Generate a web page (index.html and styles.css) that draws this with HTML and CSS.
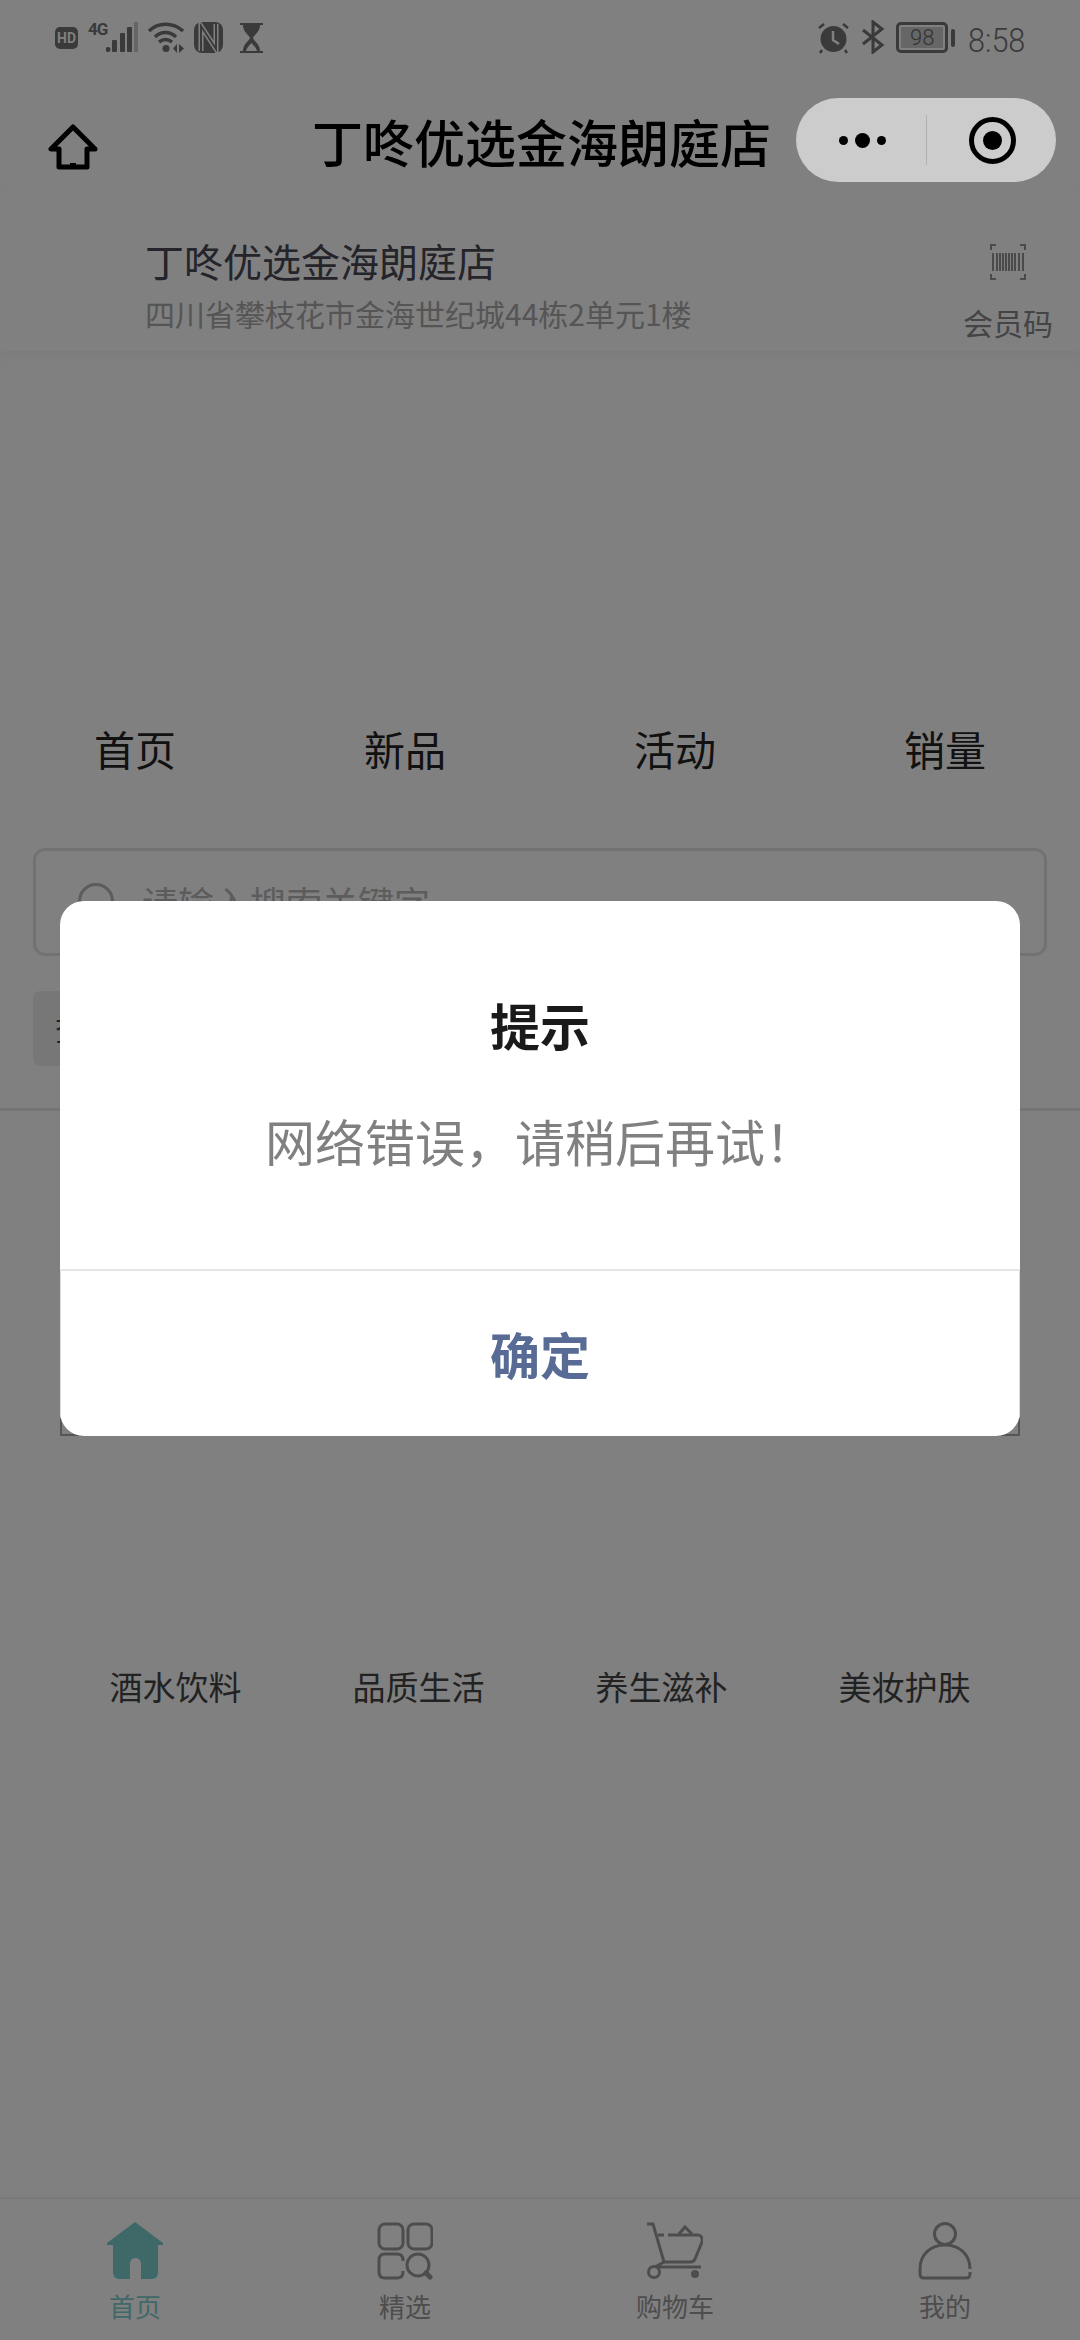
FILE: index.html
```html
<!DOCTYPE html>
<html lang="zh">
<head>
<meta charset="utf-8">
<title>丁咚优选金海朗庭店</title>
<link rel="stylesheet" href="styles.css">
</head>
<body>
<div class="page">
  <div class="status">
    <div class="status-left">
      <div class="hdi"><span>HD</span></div>
      <div class="sig">
        <span class="four">4G</span>
        <svg width="34" height="32" viewBox="20 0 34 32"><circle cx="22" cy="28.500" r="2.500" fill="#3a3a3a"/><rect x="26" y="19" width="5" height="12" rx="1" fill="#3a3a3a"/><rect x="34" y="12" width="5" height="19" rx="1" fill="#3a3a3a"/><rect x="41" y="6" width="5" height="25" rx="1" fill="#3a3a3a"/><rect x="48" y="1" width="4" height="30" fill="#666"/></svg>
      </div>
      <svg class="wifi" width="36" height="31" viewBox="0 0 36 31" fill="none" stroke="#3a3a3a" stroke-width="3.500"><path d="M1 9C10 0 25 0 35 9"/><path d="M7 15C13 9 22 9 28 15"/><path d="M11 20C15 17 20 17 24 20"/><circle cx="18" cy="26.500" r="3.500" fill="#3a3a3a" stroke="none"/><path d="M29 22l-4 4.500 4 4.500zM31 22l5 4.500-5 4.500z" fill="#3a3a3a" stroke="none"/></svg>
      <svg class="nfc" width="30" height="31" viewBox="0 0 30 31"><rect width="29" height="31" rx="8" fill="#3a3a3a"/><path d="M7 29V4L22 27V2" fill="none" stroke="#808080" stroke-width="5"/><path d="M7 29V4L22 27V2" fill="none" stroke="#3a3a3a" stroke-width="2"/></svg>
      <svg class="glass" width="24" height="30" viewBox="0 0 24 30"><path d="M0 0H23V2H20C20 9 14 12 13 15C14 18 20 21 20 28H23V30H0V28H3C3 21 9 18 10 15C9 12 3 9 3 2H0Z" fill="#3a3a3a"/><path d="M6 28C7 24 10 22 11.500 20C13 22 16 24 17 28Z" fill="#808080"/></svg>
    </div>
    <div class="status-right">
      <svg width="33" height="32" viewBox="0 0 33 32"><circle cx="16.500" cy="17" r="13" fill="#3a3a3a"/><path d="M16 9v9l6 4" fill="none" stroke="#808080" stroke-width="2.500"/><path d="M2 6l5-4M31 6l-5-4M5 28l-2 3M28 28l2 3" stroke="#3a3a3a" stroke-width="2.500"/></svg>
      <svg class="bt" width="24" height="34" viewBox="0 0 24 34" fill="none" stroke="#3a3a3a" stroke-width="3"><path d="M2 10L21 25 12 32V2L21 9 2 24"/></svg>
      <div class="battery"><div class="battery-body"><span class="battery-num">98</span></div><div class="battery-tip"></div></div>
      <span class="time">8:58</span>
    </div>
  </div>

  <header class="titlebar">
    <svg class="home" width="50" height="46" viewBox="0 0 50 46" fill="none" stroke="#000" stroke-width="5" stroke-linejoin="round"><path d="M25 3L3 25H11V43H39V25H47Z"/><path d="M22 42h6" stroke-width="6"/></svg>
    <h1 class="title">丁咚优选金海朗庭店</h1>
    <div class="capsule">
      <div class="dots"><i class="dot"></i><i class="dot big"></i><i class="dot"></i></div>
      <i class="capsule-sep"></i>
      <div class="target"><i></i></div>
    </div>
  </header>

  <section class="store">
    <div class="store-info">
      <div class="store-name">丁咚优选金海朗庭店</div>
      <div class="store-addr">四川省攀枝花市金海世纪城44栋2单元1楼</div>
    </div>
    <div class="member">
      <svg width="36" height="36" viewBox="0 0 36 36" fill="none" stroke="#4a4a4a" stroke-width="2"><path d="M1 6V1H6M30 1H35V6M1 30V35H6M30 35H35V30"/><path d="M3 9V27M7 9V27M10 9V27M13 9V27M16 9V27M19 9V27M22 9V27M25 9V27M29 9V27M33 9V27"/></svg>
      <span>会员码</span>
    </div>
  </section>

  <nav class="tabs">
    <span>首页</span><span>新品</span><span>活动</span><span>销量</span>
  </nav>

  <div class="search">
    <i class="search-icon"></i>
    <span>请输入搜索关键字</span>
  </div>
  <div class="chip"><span>查</span></div>
  <hr class="rule">
  <div class="banner"></div>

  <div class="cats">
    <span>酒水饮料</span><span>品质生活</span><span>养生滋补</span><span>美妆护肤</span>
  </div>

  <footer class="tabbar">
    <div class="tab active">
      <svg width="56" height="58" viewBox="0 0 56 58"><path d="M28 0L56 21V23H51V50C51 54 49 57 45 57H34V42C34 34 23 34 23 42V57H12C8 57 6 54 6 50V23H0V21Z" fill="#3f6868"/></svg>
      <span>首页</span>
    </div>
    <div class="tab">
      <svg width="56" height="58" viewBox="0 0 56 58" fill="none" stroke="#4d4d4d" stroke-width="3"><rect x="2" y="2" width="24" height="25" rx="6"/><rect x="31" y="2" width="24" height="25" rx="6"/><path d="M26 39V38C26 34 24 32 20 32H8C4 32 2 34 2 38V50C2 54 4 56 8 56H20C24 56 26 54 26 50V49"/><circle cx="41" cy="43" r="11"/><path d="M49 51l4 4" stroke-width="5" stroke-linecap="round"/></svg>
      <span>精选</span>
    </div>
    <div class="tab">
      <svg width="56" height="58" viewBox="0 0 56 58" fill="none" stroke="#4d4d4d" stroke-width="3"><path d="M0 2H6L17 40H44C46 40 47 39 48 37L55 20C56 16 54 13 51 13H21"/><path d="M11 13H17M32 12L38 5L45 12"/><path d="M17 40L8 45"/><path d="M11 45H54"/><circle cx="7" cy="50" r="5.500"/><circle cx="48" cy="52" r="4" fill="#4d4d4d" stroke="none"/></svg>
      <span>购物车</span>
    </div>
    <div class="tab">
      <svg width="56" height="58" viewBox="0 0 56 58" fill="none" stroke="#4d4d4d" stroke-width="3"><circle cx="28" cy="12" r="10.500"/><path d="M53 47C53 32 42 23 28 23S3 32 3 47V52C3 55 4 56 7 56H49C52 56 53 55 53 52V50"/></svg>
      <span>我的</span>
    </div>
  </footer>

  <div class="overlay">
    <div class="modal">
      <div class="modal-body">
        <div class="modal-title">提示</div>
        <div class="modal-text">网络错误，请稍后再试！</div>
      </div>
      <div class="modal-btn">确定</div>
    </div>
  </div>
</div>
</body>
</html>
```
FILE: styles.css
```css
* { box-sizing: border-box; }
html, body { margin: 0; padding: 0; }
body { font-family: "Noto Sans CJK SC", "Noto Sans", sans-serif; background: #808080; }
.page { position: relative; width: 1080px; height: 2340px; background: #808080; overflow: hidden; display: flex; flex-direction: column; }
i { display: block; }

.status { height: 75px; padding: 22px 48px 0 55px; display: flex; justify-content: space-between; align-items: flex-start; color: #3a3a3a; }
.status-left { display: flex; align-items: flex-start; }
.status-left svg { display: block; }
.hdi { margin-top: 5px; width: 23px; height: 22px; border-radius: 5px; background: #3a3a3a; color: #808080; font-family: "Roboto", sans-serif; font-weight: 700; font-size: 14px; line-height: 22px; text-align: center; }
.sig { margin-left: 8px; margin-top: -1px; width: 54px; height: 32px; display: flex; align-items: flex-start; }
.four { width: 20px; padding-left: 2px; font-family: "Roboto", sans-serif; font-weight: 700; font-size: 17px; line-height: 17px; letter-spacing: -1px; color: #3a3a3a; white-space: nowrap; }
.wifi { margin-left: 8px; }
.nfc { margin-left: 10px; }
.glass { margin-left: 16px; margin-top: 1px; }
.status-right { display: flex; align-items: flex-start; }
.status-right svg { display: block; }
.bt { margin-left: 11px; margin-top: -2px; }
.battery { display: flex; align-items: center; margin-left: 11px; height: 31px; }
.battery-body { width: 52px; height: 31px; border: 3px solid #3a3a3a; border-radius: 5px; display: flex; align-items: center; justify-content: center; position: relative; }
.battery-body::before { content: ""; position: absolute; left: 2px; right: 2px; top: 2px; bottom: 2px; background: #666; }
.battery-num { position: relative; font-family: "Roboto", sans-serif; font-weight: 300; font-size: 22px; color: #333; line-height: 1; }
.battery-tip { width: 4px; height: 18px; background: #3a3a3a; margin-left: 3px; border-radius: 2px; }
.time { font-family: "Roboto", sans-serif; font-weight: 300; font-size: 34px; line-height: 36px; margin-left: 13px; color: #3a3a3a; transform: scaleX(.9); transform-origin: left center; }

.titlebar { height: 122px; display: flex; align-items: center; position: relative; padding-left: 48px; }
.home { display: block; margin-top: 22px; }
.title { margin: 10px 0 0 214px; font-size: 51px; font-weight: 500; line-height: 70px; color: #000; white-space: nowrap; }
.capsule { position: absolute; left: 796px; top: 23px; width: 260px; height: 84px; border-radius: 42px; background: #cccccc; display: flex; align-items: center; }
.dots { width: 130px; display: flex; justify-content: center; align-items: center; gap: 7px; padding-left: 3px; }
.dot { width: 9px; height: 9px; border-radius: 50%; background: #000; }
.dot.big { width: 15px; height: 15px; }
.capsule-sep { width: 1px; height: 50px; background: #b0b0b0; }
.target { flex: 1; display: flex; justify-content: center; align-items: center; }
.target i { width: 47px; height: 47px; border: 5px solid #000; border-radius: 50%; position: relative; margin-left: 2px; }
.target i::after { content: ""; position: absolute; left: 9px; top: 9px; width: 19px; height: 19px; background: #000; border-radius: 50%; }

.store { height: 154px; padding: 36px 27px 0 145px; display: flex; justify-content: space-between; box-shadow: 0 4px 10px #7b7b7b; background: #808080; position: relative; }
.store-name { font-size: 39px; line-height: 54px; color: #24242a; white-space: nowrap; }
.store-addr { font-size: 30px; line-height: 42px; color: #555; margin-top: 5px; white-space: nowrap; }
.member { display: flex; flex-direction: column; align-items: center; color: #444; font-size: 30px; line-height: 42px; gap: 21px; margin-top: 11px; }
.member svg { display: block; }

.tabs { margin-top: 370px; height: 54px; display: grid; grid-template-columns: repeat(4, 270px); font-size: 41px; line-height: 54px; color: #111; }
.tabs span { text-align: center; }

.search { margin: 73px 33px 0 33px; height: 108px; border: 3px solid #727272; border-radius: 12px; display: flex; align-items: center; padding-left: 42px; color: #5c5c5c; font-size: 36px; }
.search-icon { width: 36px; height: 36px; border: 3px solid #5c5c5c; border-radius: 50%; margin-right: 28px; margin-top: -2px; }
.chip { margin: 35px 0 0 33px; width: 200px; height: 75px; background: #777; border-radius: 8px; padding-left: 22px; font-size: 30px; line-height: 75px; color: #222; }
.rule { margin: 42px 0 0; border: 0; height: 3px; background: #747474; flex: none; }
.banner { margin: 0 60px; height: 325px; border: 2px solid #555; }

.cats { margin-top: 226px; padding: 0 0 0 54px; height: 48px; display: grid; grid-template-columns: repeat(4, 243px); font-size: 33px; line-height: 48px; color: #222; }
.cats span { text-align: center; white-space: nowrap; }

.tabbar { position: absolute; left: 0; right: 0; bottom: 0; height: 143px; border-top: 2px solid #797979; display: grid; grid-template-columns: repeat(4, 270px); padding-top: 23px; }
.tab { display: flex; flex-direction: column; align-items: center; color: #4d4d4d; font-size: 26px; line-height: 36px; }
.tab svg { display: block; margin-bottom: 8px; }
.tab.active { color: #3f6868; }

.overlay { position: absolute; inset: 0; display: flex; justify-content: center; padding-top: 901px; }
.modal { width: 960px; height: 535px; background: #fff; border-radius: 24px; display: flex; flex-direction: column; overflow: hidden; }
.modal-body { height: 370px; border-bottom: 2px solid #e5e5e5; padding-top: 88px; text-align: center; }
.modal-title { font-size: 50px; font-weight: 700; line-height: 70px; color: #1a1a1a; }
.modal-text { font-size: 50px; line-height: 70px; color: #808080; margin-top: 46px; }
.modal-btn { flex: 1; display: flex; align-items: center; justify-content: center; font-size: 50px; font-weight: 700; color: #576b95; padding-bottom: 2px; border-left: 1px solid #ddd; border-right: 1px solid #ddd; }
```
